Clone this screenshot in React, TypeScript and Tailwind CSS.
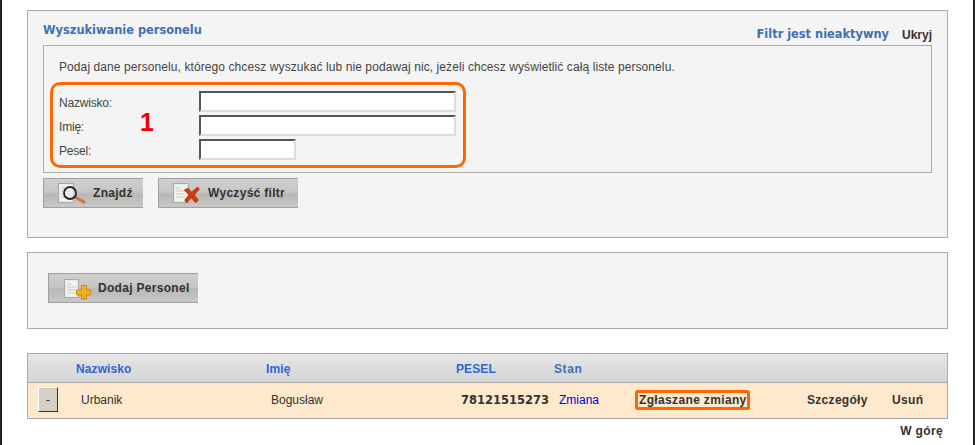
import React from "react";

const Doc: React.FC<{ y?: number; h?: number; w?: number }> = ({ y = 2, h = 20, w = 15 }) => (
  <g transform={`translate(0 ${y})`}>
    <rect x="0.5" y="0.5" width={w} height={h - 1} fill="#e6e9e6" stroke="#a8aca8" />
    <rect x="2" y="2" width={w - 3} height={h - 4} fill="#f2f3f0" />
    <path d="M3 5h4M3 8h9M3 11h9M3 14h9" stroke="#c6c9c6" strokeWidth="1" />
  </g>
);

const SearchIcon = () => (
  <svg width="30" height="24" viewBox="0 0 30 24">
    <Doc />
    <path d="M18 16.500l8 4.500" stroke="#d9702c" strokeWidth="3" strokeLinecap="round" />
    <circle cx="12" cy="12" r="6" fill="#e8edef" fillOpacity="0.6" stroke="#222222" strokeWidth="1.8" />
  </svg>
);

const ClearIcon = () => (
  <svg width="30" height="24" viewBox="0 0 30 24">
    <Doc />
    <path d="M11 9l4-2 3.500 4 6-5 2 2-5 6 4 5-3 3-4-5-5 5-2-3 4.500-5z" fill="#cc3a12" stroke="#a83010" strokeWidth="0.5" />
  </svg>
);

const AddIcon = () => (
  <svg width="30" height="24" viewBox="0 0 30 24">
    <Doc y={3} h={19} w={14} />
    <path d="M17.500 9.500h5v4.500h4v5h-4v4h-5v-4h-5v-5h5z" fill="#f2b01e" stroke="#c98a14" strokeWidth="1" />
  </svg>
);

const ToolButton: React.FC<{ icon: React.ReactNode; label: string; className: string }> = ({ icon, label, className }) => (
  <button
    className={`flex items-center whitespace-nowrap h-[30px] border border-[#a0a0a0] border-r-0 bg-[linear-gradient(#cfcfcd_0%,#c6c6c4_45%,#b8b8b6_55%,#c8c8c6_100%)] font-['Liberation_Sans'] font-bold text-[12px] tracking-[0.3px] text-[#333333] ${className}`}
  >
    {icon}
    <span>{label}</span>
  </button>
);

const TextField: React.FC<{ label: string; width: string }> = ({ label, width }) => (
  <div className="flex items-center h-6">
    <label className="w-[140px] shrink-0 pt-[4px] text-[12px] tracking-[-0.2px] text-[#444444] font-['Liberation_Sans']">{label}</label>
    <input
      type="text"
      className={`h-[21px] shrink-0 bg-white border-2 border-t-[#555555] border-l-[#555555] border-r-[#dddddd] border-b-[#dddddd] ${width}`}
    />
  </div>
);

export default function App() {
  return (
    <div className="flex h-[445px] w-[975px] overflow-hidden bg-white font-['DejaVu_Sans',sans-serif]">
      <div className="w-[2px] bg-[#222222]" />
      <main className="w-[971px] pl-[25px] pr-[25px] pt-[10px]">
        <section className="h-[228px] border border-[#aaaaaa] bg-[#f4f4f4] px-[15px] pt-[10px]">
          <div className="flex items-start justify-between h-[24px]">
            <h2 className="pt-[1px] text-[11.4px] font-bold text-[#3f6fb5]">Wyszukiwanie personelu</h2>
            <div className="flex gap-[13px] pt-[5px] text-[11.4px] font-bold">
              <span className="text-[#3f6fb5]">Filtr jest nieaktywny</span>
              <span className="font-['Liberation_Sans'] text-[12px] text-[#333333]">Ukryj</span>
            </div>
          </div>
          <div className="h-[128px] border border-[#aaaaaa] px-[6px] pt-[13px]">
            <p className="pl-[9px] text-[12px] tracking-[0.09px] leading-[16px] text-[#444444] font-['Liberation_Sans']">
              Podaj dane personelu, którego chcesz wyszukać lub nie podawaj nic, jeżeli chcesz wyświetlić całą liste personelu.
            </p>
            <div className="relative mt-[7px] h-[86px] w-[416px] rounded-[10px] border-[3px] border-[#ff6600] pl-[6px] pt-[4px]">
              <TextField label="Nazwisko:" width="w-[257px]" />
              <TextField label="Imię:" width="w-[257px]" />
              <TextField label="Pesel:" width="w-[97px]" />
              <span className="absolute left-[87px] top-[23px] text-[25px] leading-[28px] font-bold text-[#ee0000] font-['Liberation_Sans']">1</span>
            </div>
          </div>
          <div className="mt-[5px] flex gap-[15px]">
            <ToolButton icon={<SearchIcon />} label="Znajdź" className="w-[100px] pl-[14px] gap-[5px]" />
            <ToolButton icon={<ClearIcon />} label="Wyczyść filtr" className="w-[140px] pl-[14px] gap-[5px]" />
          </div>
        </section>

        <section className="mt-[14px] h-[77px] border border-[#aaaaaa] bg-[#f4f4f4] pl-[20px] pt-[20px]">
          <ToolButton icon={<AddIcon />} label="Dodaj Personel" className="w-[150px] pl-[15px] gap-[4px]" />
        </section>

        <section className="mt-[24px] border border-[#aaaaaa] text-[12px]">
          <div className="flex items-center h-[29px] border-b border-[#aaaaaa] bg-gradient-to-b from-[#e6e6e6] to-[#d4d4d4] pt-[2px] font-['Liberation_Sans'] font-bold tracking-[0.1px] text-[#2f66d0]">
            <span className="w-[238px] pl-[48px]">Nazwisko</span>
            <span className="w-[190px]">Imię</span>
            <span className="w-[98px]">PESEL</span>
            <span className="text-[#3f6fb5] tracking-[0.6px]">Stan</span>
          </div>
          <div className="flex items-center h-[35px] bg-[#ffe9cc] pb-[2px] text-[#333333]">
            <div className="w-[53px] pl-[10px]">
              <button className="block h-[25px] w-[20px] border border-t-white border-l-white border-r-[#333333] border-b-[#333333] bg-[#d4d0c8] text-[12px]">-</button>
            </div>
            <span className="w-[190px] font-['Liberation_Sans']">Urbanik</span>
            <span className="w-[190px] font-['Liberation_Sans']">Bogusław</span>
            <span className="w-[98px] pt-[2px] text-[11.5px] font-bold">78121515273</span>
            <span className="w-[76px] text-[#0000ee] font-['Liberation_Sans']">Zmiana</span>
            <span className="w-[172px]">
              <span className="flex h-[20px] w-[115px] items-center rounded-[3px] border-[3px] border-[#ff6600] pl-[1px] font-['Liberation_Sans'] font-bold tracking-[0.35px]">Zgłaszane zmiany</span>
            </span>
            <span className="w-[85px] font-['Liberation_Sans'] font-bold tracking-[0.3px]">Szczegóły</span>
            <span className="font-['Liberation_Sans'] font-bold tracking-[0.35px]">Usuń</span>
          </div>
        </section>
        <div className="pt-[3px] pr-[5px] text-right text-[12px] font-['Liberation_Sans'] font-bold tracking-[0.35px] text-[#333333]">W górę</div>
      </main>
      <div className="w-[2px] bg-[#222222]" />
    </div>
  );
}
